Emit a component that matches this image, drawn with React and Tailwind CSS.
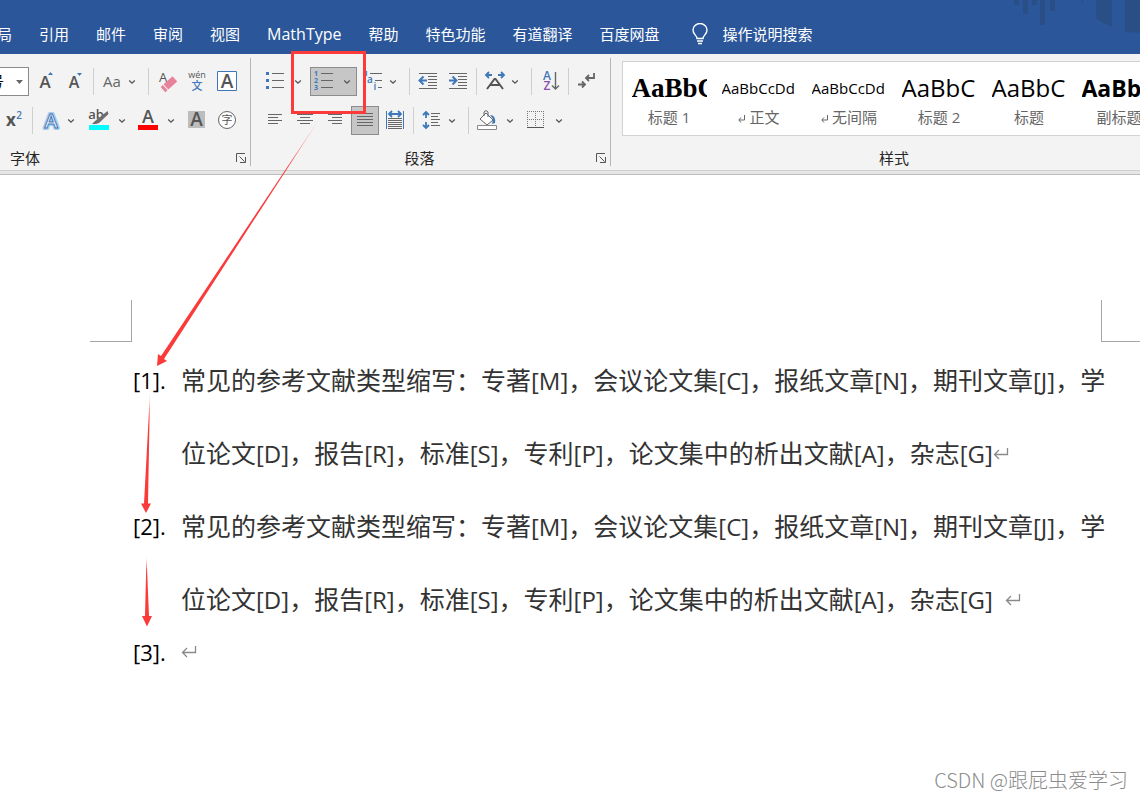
import React from "react";

const tabs = [
  { name: "布局" },
  { name: "引用" },
  { name: "邮件" },
  { name: "审阅" },
  { name: "视图" },
  { name: "MathType", latin: true },
  { name: "帮助" },
  { name: "特色功能" },
  { name: "有道翻译" },
  { name: "百度网盘" },
];

const styles = [
  {
    name: "标题 1",
    sample: "AaBbC",
    look: "font-['Liberation_Serif',serif] font-bold text-[27px]",
  },
  { name: "正文", sample: "AaBbCcDd", look: "text-[15px]", mark: true },
  { name: "无间隔", sample: "AaBbCcDd", look: "text-[15px]", mark: true },
  { name: "标题 2", sample: "AaBbC", look: "text-2xl" },
  { name: "标题", sample: "AaBbC", look: "text-2xl" },
  { name: "副标题", sample: "AaBbC", look: "font-bold text-[23px]" },
];

const firstLine =
  "常见的参考文献类型缩写：专著[M]，会议论文集[C]，报纸文章[N]，期刊文章[J]，学";
const secondLine =
  "位论文[D]，报告[R]，标准[S]，专利[P]，论文集中的析出文献[A]，杂志[G]";

const Icon = ({ children, w = 22 }) => (
  <svg
    width={w}
    height="21"
    viewBox={`0 0 ${w} 21`}
    fill="none"
    className="shrink-0 overflow-visible"
    aria-hidden="true"
  >
    {children}
  </svg>
);

const Tool = ({ label, className, children }) => (
  <button
    type="button"
    aria-label={label}
    className={`flex h-[29px] shrink-0 items-center justify-center ${className}`}
  >
    {children}
  </button>
);

const Chevron = ({ label, className = "w-2" }) => (
  <Tool label={label} className={className}>
    <svg width="8" height="6" viewBox="0 0 8 6" fill="none" aria-hidden="true">
      <path d="M1.2 1.5 4 4.2 6.8 1.5" stroke="#555" strokeWidth="1.3" />
    </svg>
  </Tool>
);

const Sep = ({ className = "" }) => (
  <span className={`h-[27px] w-px shrink-0 bg-[#cfcfcf] ${className}`} />
);

// horizontal rules given as [x1, x2, y]
const Rules = ({ rows, color = "#666" }) =>
  rows.map(([x1, x2, y]) => (
    <rect key={`${x1}-${y}`} x={x1} y={y} width={x2 - x1} height="1" fill={color} />
  ));

const Letter = ({ x, y, size, color = "#555", weight = 400, children }) => (
  <text
    x={x}
    y={y}
    fontSize={size}
    fill={color}
    fontWeight={weight}
    textAnchor="middle"
  >
    {children}
  </text>
);

const Launcher = () => (
  <button type="button" aria-label="对话框启动器" className="shrink-0">
    <svg width="10" height="10" viewBox="0 0 10 10" fill="none" aria-hidden="true">
      <path d="M.5 9V.5H9M3.5 3.5l5 5M9.5 4v5.5H4" stroke="#555" />
    </svg>
  </button>
);

const Return = ({ className = "" }) => (
  <svg
    width="16"
    height="16"
    viewBox="0 0 16 16"
    fill="none"
    className={`shrink-0 ${className}`}
    aria-hidden="true"
  >
    <path d="M14.5 2v6.500H1.500M6 4 1.500 8.500 6 13" stroke="#8a8a8a" strokeWidth="1.3" />
  </svg>
);

// bracketed codes are set a little smaller than the Chinese text
const Line = ({ text, children }) => (
  <p className="flex h-[73px] items-center">
    <span>
      {text.split(/(\[\w\])/).map((part, i) =>
        part.startsWith("[") ? (
          <span key={i} className="text-2xl">
            {part}
          </span>
        ) : (
          part
        ),
      )}
    </span>
    {children}
  </p>
);

const Header = () => (
  <header className="relative flex h-[54px] items-end overflow-hidden bg-[#2b579a] text-[15px] text-white">
    <svg
      width="130"
      height="36"
      viewBox="0 0 130 36"
      className="absolute top-0 right-0"
      fill="#2a4f87"
      aria-hidden="true"
    >
      <path d="M4 0h5v5H4zM13 0h5v14h-5zM22 0h5v5h-5zM30 0h5v25h-5zM40 0h5v11h-5z" />
      <path d="M71 0h2v4zM86 0h16v27q-9-3-16-9zM115 0h15v33l-15-1z" />
    </svg>
    <nav className="relative -ml-[18px] flex h-10 items-center gap-[27px] whitespace-nowrap">
      {tabs.map((tab) => (
        <button key={tab.name} type="button" className={tab.latin ? "text-base" : ""}>
          {tab.name}
        </button>
      ))}
      <button type="button" className="ml-1 flex items-center gap-3.5">
        <svg width="18" height="22" viewBox="0 0 18 22" fill="none" aria-hidden="true">
          <path
            d="M6 15.500c0-3-4-4-4-8.500a7 6.500 0 0 1 14 0c0 4.500-4 5.500-4 8.500zM6 18h6M7 20.500h4"
            stroke="#fff"
            strokeWidth="1.400"
          />
        </svg>
        操作说明搜索
      </button>
    </nav>
  </header>
);

const FontGroup = () => (
  <section className="flex w-[251px] shrink-0 flex-col pt-[13px]">
    <div className="flex items-center">
      <div className="relative flex h-[29px] w-[29px] shrink-0 justify-end overflow-hidden">
        <select
          aria-label="字号"
          className="w-[72px] shrink-0 appearance-none border border-[#8a8a8a] bg-white pl-4 text-[15px] text-black"
        >
          <option>四号</option>
        </select>
        <svg
          width="7"
          height="4"
          viewBox="0 0 7 4"
          className="pointer-events-none absolute top-[13px] right-1.5"
          aria-hidden="true"
        >
          <path d="M0 0h7L3.500 4z" fill="#666" />
        </svg>
      </div>
      <Tool label="增大字号" className="w-[34px]">
        <Icon>
          <Letter x={10} y={17} size={17} weight={600}>A</Letter>
          <path d="M13 4h5L15.500 1z" fill="#3f78b8" />
        </Icon>
      </Tool>
      <Tool label="减小字号" className="w-[26px]">
        <Icon>
          <Letter x={9} y={17} size={16} weight={600}>A</Letter>
          <path d="M12 2h5l-2.500 3z" fill="#3f78b8" />
        </Icon>
      </Tool>
      <Sep className="mx-1" />
      <Tool label="更改大小写" className="w-7 text-[15px] text-[#666]">Aa</Tool>
      <Chevron label="更改大小写选项" className="w-3" />
      <Sep className="ml-2.5" />
      <Tool label="清除所有格式" className="w-[38px]">
        <Icon>
          <Letter x={6} y={11} size={13}>A</Letter>
          <g transform="rotate(-42 13 13)" fill="#e8829a">
            <path d="M8 9h12v7H8z" />
            <path d="M4 9h3v7H4z" />
          </g>
        </Icon>
      </Tool>
      <Tool label="拼音指南" className="w-5">
        <Icon>
          <Letter x={11} y={7} size={9}>wén</Letter>
          <Letter x={11} y={19} size={11} color="#3f78b8" weight={500}>文</Letter>
        </Icon>
      </Tool>
      <Tool label="字符边框" className="w-10">
        <Icon>
          <path d="M1.500.500h19v19h-19z" fill="#fff" stroke="#3f78b8" />
          <Letter x={11} y={17} size={19} weight={600}>A</Letter>
        </Icon>
      </Tool>
    </div>
    <div className="mt-2.5 flex items-center">
      <Tool label="上标" className="w-7">
        <Icon>
          <Letter x={8} y={16} size={17} weight={700}>x</Letter>
          <Letter x={16} y={9} size={10} weight={600} color="#3f78b8">2</Letter>
        </Icon>
      </Tool>
      <Sep className="ml-1" />
      <Tool label="文本效果和版式" className="w-[34px]">
        <Icon>
          <text
            x="12"
            y="18"
            fontSize="20"
            fontWeight="600"
            textAnchor="middle"
            fill="#fff"
            stroke="#a9cbee"
            strokeWidth="4"
            strokeLinejoin="round"
            paintOrder="stroke"
          >
            A
          </text>
          <text
            x="12"
            y="18"
            fontSize="20"
            fontWeight="600"
            textAnchor="middle"
            fill="#fff"
            stroke="#3f78b8"
          >
            A
          </text>
        </Icon>
      </Tool>
      <Chevron label="文本效果选项" className="mr-2 w-2" />
      <Tool label="文本突出显示颜色" className="w-8">
        <Icon>
          <Letter x={8} y={9} size={13} weight={600}>ab</Letter>
          <path d="m19.500 1 1 3L11 13l-3 1H4l3-3z" fill="#6e6e6e" />
          <path d="M1 15h20v5H1z" fill="#00ffff" />
        </Icon>
      </Tool>
      <Chevron label="突出显示选项" className="w-3.5" />
      <Tool label="字体颜色" className="w-9">
        <Icon>
          <Letter x={12} y={13} size={18} weight={600}>A</Letter>
          <path d="M2 15h20v5H2z" fill="#f00" />
        </Icon>
      </Tool>
      <Chevron label="字体颜色选项" className="w-3" />
      <Tool label="字符底纹" className="w-[38px]">
        <Icon>
          <path d="M3 1h17v17H3z" fill="#bdbdbd" />
          <Letter x={11.5} y={16} size={19} weight={600}>A</Letter>
        </Icon>
      </Tool>
      <Tool label="带圈字符" className="w-6">
        <Icon>
          <circle cx="11" cy="10" r="8.500" stroke="#666" fill="#fff" />
          <Letter x={11} y={14} size={11}>字</Letter>
        </Icon>
      </Tool>
    </div>
    <div className="mt-[13px] flex h-5 items-center justify-between pr-[5px] pl-2.5 text-[15px]">
      字体
      <Launcher />
    </div>
  </section>
);

const ParagraphGroup = () => (
  <section className="flex w-[360px] shrink-0 flex-col pt-[13px]">
    <div className="flex items-center">
      <Tool label="项目符号" className="ml-1.5 w-9">
        <Icon>
          <path d="M2 1h3v3H2zM2 8h3v3H2zM2 15h3v3H2z" fill="#3f78b8" />
          <Rules rows={[[8, 20, 2], [8, 20, 9], [8, 20, 16]]} />
        </Icon>
      </Tool>
      <Chevron label="项目符号选项" className="w-2.5" />
      <div className="ml-[7px] flex h-[29px] w-[47px] shrink-0 items-center border border-[#8c8c8c] bg-[#c6c6c6]">
        <Tool label="编号" className="w-7">
          <Icon>
            <Letter x={2} y={5} size={7} weight={700} color="#3f78b8">1</Letter>
            <Letter x={2} y={12} size={7} weight={700} color="#3f78b8">2</Letter>
            <Letter x={2} y={19} size={7} weight={700} color="#3f78b8">3</Letter>
            <Rules rows={[[7, 19, 2], [7, 19, 9], [7, 19, 16]]} />
          </Icon>
        </Tool>
        <Chevron label="编号选项" className="w-4" />
      </div>
      <Tool label="多级列表" className="w-8">
        <Icon>
          <Rules rows={[[8, 20, 2], [13, 20, 9], [16, 20, 16]]} />
          <Letter x={4} y={5} size={7} weight={700} color="#3f78b8">1</Letter>
          <Letter x={8} y={12} size={10} weight={600} color="#3f78b8">a</Letter>
          <Letter x={13} y={19} size={10} weight={600} color="#3f78b8">i</Letter>
        </Icon>
      </Tool>
      <Chevron label="多级列表选项" />
      <Sep className="ml-3" />
      <Tool label="减少缩进量" className="w-9">
        <Icon>
          <Rules rows={[[2, 20, 2], [11, 20, 5], [11, 20, 8], [11, 20, 11], [11, 20, 14], [2, 20, 17]]} />
          <path d="M10 9.500H3M6.500 5.500l-4 4 4 4" stroke="#3f78b8" strokeWidth="2" />
        </Icon>
      </Tool>
      <Tool label="增加缩进量" className="w-6">
        <Icon>
          <Rules rows={[[2, 20, 2], [11, 20, 5], [11, 20, 8], [11, 20, 11], [11, 20, 14], [2, 20, 17]]} />
          <path d="M2 9.500h7M5.500 5.500l4 4-4 4" stroke="#3f78b8" strokeWidth="2" />
        </Icon>
      </Tool>
      <Sep className="ml-1.5" />
      <Tool label="中文版式" className="w-[34px]">
        <Icon>
          <path
            d="M9 4H3M6 1 3 4l3 3M15 4h6M18 1l3 3-3 3"
            stroke="#3f78b8"
            strokeWidth="1.800"
          />
          <path d="m4 18 7.500-10h1l7.500 10M7 14h10" stroke="#555" strokeWidth="2" />
        </Icon>
      </Tool>
      <Chevron label="中文版式选项" />
      <Sep className="ml-3" />
      <Tool label="排序" className="w-9">
        <Icon>
          <Letter x={8} y={9} size={12} weight={600} color="#3f78b8">A</Letter>
          <Letter x={8} y={19} size={12} weight={600} color="#8a4fb0">Z</Letter>
          <path d="M16.500 1v17M13 14.500l3.500 3.500 3.500-3.500" stroke="#666" strokeWidth="1.400" />
        </Icon>
      </Tool>
      <Sep />
      <Tool label="显示/隐藏编辑标记" className="w-9">
        <Icon>
          <path
            d="M18 2v5h-8M13 4l-3 3 3 3M2 13.500h7M6 10.500l3 3-3 3"
            stroke="#666"
            strokeWidth="1.800"
          />
        </Icon>
      </Tool>
    </div>
    <div className="mt-2.5 flex items-center">
      <Tool label="左对齐" className="ml-[9px] w-[30px]">
        <Icon>
          <Rules rows={[[4, 18, 4], [4, 14, 7], [4, 18, 10], [4, 14, 13]]} />
        </Icon>
      </Tool>
      <Tool label="居中" className="w-[30px]">
        <Icon>
          <Rules rows={[[3, 19, 4], [6, 16, 7], [3, 19, 10], [6, 16, 13]]} />
        </Icon>
      </Tool>
      <Tool label="右对齐" className="w-[30px]">
        <Icon>
          <Rules rows={[[4, 18, 4], [8, 18, 7], [4, 18, 10], [8, 18, 13]]} />
        </Icon>
      </Tool>
      <Tool label="两端对齐" className="ml-px w-7 border border-[#8c8c8c] bg-[#c6c6c6]">
        <Icon>
          <Rules rows={[[3, 19, 3], [3, 19, 6], [3, 19, 9], [3, 19, 12], [3, 19, 15]]} />
        </Icon>
      </Tool>
      <Tool label="分散对齐" className="w-8">
        <Icon>
          <path d="M2.500 1v18M19.500 1v18" stroke="#3f78b8" />
          <path d="M5 4h12M8 1 5 4l3 3M14 1l3 3-3 3" stroke="#3f78b8" strokeWidth="1.800" />
          <Rules rows={[[4, 18, 8], [4, 18, 10], [4, 18, 12], [4, 18, 14], [4, 18, 16], [4, 18, 18]]} />
        </Icon>
      </Tool>
      <Sep className="ml-0.5" />
      <Tool label="行和段落间距" className="w-[34px]">
        <Icon>
          <path
            d="M6 2v6M3 5l3-3 3 3M6 18v-6M3 15l3 3 3-3"
            stroke="#3f78b8"
            strokeWidth="1.800"
          />
          <Rules rows={[[11, 20, 3], [11, 18, 6], [11, 20, 9], [11, 18, 12], [11, 20, 15]]} />
        </Icon>
      </Tool>
      <Chevron label="行距选项" />
      <Sep className="ml-3" />
      <Tool label="底纹" className="w-9">
        <Icon>
          <path d="m4 9 6-6 7 7-6 5z" fill="#fff" stroke="#666" />
          <path d="M8 6V2q2-3 4 0v5" stroke="#666" />
          <path d="M14 5q6 0 5 8l-3 1 1-5z" fill="#3f78b8" />
          <path d="M1.500 15.500h19v4h-19z" fill="#fff" stroke="#888" />
        </Icon>
      </Tool>
      <Chevron label="底纹选项" className="w-2.5" />
      <Tool label="边框" className="w-10">
        <Icon>
          <path
            d="M3.500 1v17M11.500 1v17M19.500 1v17M3 1.500h17M3 9.500h17"
            stroke="#777"
            strokeDasharray="1 1"
          />
          <path d="M3 17.500h17" stroke="#555" />
        </Icon>
      </Tool>
      <Chevron label="边框选项" />
    </div>
    <div className="mt-[13px] flex h-5 items-center pr-[5px] text-[15px]">
      <span className="flex-1 pr-2 text-center">段落</span>
      <Launcher />
    </div>
  </section>
);

const StylesGroup = () => (
  <section className="min-w-0 flex-1 overflow-hidden pt-[7px] pl-[11px]">
    <div className="flex h-[75px] w-max border border-[#d2d2d2] bg-white pl-px">
      {styles.map((s) => (
        <button
          key={s.name}
          type="button"
          className="flex w-[90px] shrink-0 flex-col items-center"
        >
          <span
            className={`mt-2 flex h-9 w-[75px] items-center overflow-hidden text-black ${s.look}`}
          >
            {s.sample}
          </span>
          <span className="flex h-[22px] items-center gap-1 text-[15px] whitespace-nowrap text-[#666]">
            {s.mark && (
              <svg
                width="7"
                height="8"
                viewBox="0 0 7 8"
                fill="none"
                className="mt-1"
                aria-hidden="true"
              >
                <path d="M6.500 0v5H1M3 2.500.800 5 3 7.500" stroke="#666" />
              </svg>
            )}
            {s.name}
          </span>
        </button>
      ))}
    </div>
    <div className="mt-3 flex h-5 items-center pl-[257px] text-[15px]">样式</div>
  </section>
);

const Ribbon = () => (
  <div className="flex h-[121px] overflow-hidden border-b border-[#bdbdbd] bg-[#e6e6e6] pb-[3px] text-[#262626]">
    <div className="flex min-w-0 flex-1 border-b border-[#cfcfcf] bg-[#f3f3f3]">
      <FontGroup />
      <span className="my-1 -ml-px w-px shrink-0 bg-[#b5b5b5]" />
      <ParagraphGroup />
      <span className="my-1 -ml-px w-px shrink-0 bg-[#b5b5b5]" />
      <StylesGroup />
    </div>
  </div>
);

const Entry = ({ number, children }) => (
  <li className="flex">
    <span className="w-12 shrink-0 text-[22px] text-black">[{number}].</span>
    <div className="flex-1">{children}</div>
  </li>
);

const Document = () => (
  <main className="flex flex-1 flex-col overflow-hidden bg-white pt-[125px]">
    <div className="flex justify-between pl-[90px]">
      <span className="h-[42px] w-[42px] border-r border-b border-[#a6a6a6]" />
      <span className="h-[42px] w-[39px] border-b border-l border-[#a6a6a6]" />
    </div>
    <ol className="mt-0.5 pl-[133px] text-[25px] leading-[73px] whitespace-nowrap text-[#333]">
      <Entry number={1}>
        <Line text={firstLine} />
        <Line text={secondLine}>
          <Return />
        </Line>
      </Entry>
      <Entry number={2}>
        <Line text={firstLine} />
        <Line text={secondLine}>
          <Return className="ml-3" />
        </Line>
      </Entry>
    </ol>
    <ol start="3" className="pl-[133px] leading-8">
      <Entry number={3}>
        <p className="flex h-8 items-center">
          <Return />
        </p>
      </Entry>
    </ol>
    <p className="mt-auto self-end pr-3 pb-[5px] font-['Noto_Sans_CJK_SC',sans-serif] text-xl font-light text-[#8c8c8c]">
      CSDN @跟屁虫爱学习
    </p>
  </main>
);

// red box and arrows drawn on top of the window
const Annotations = () => (
  <svg
    width="400"
    height="640"
    viewBox="0 0 400 640"
    className="pointer-events-none absolute top-0 left-0"
    fill="none"
    aria-hidden="true"
  >
    <defs>
      <linearGradient id="fade" x1="0" y1="0" x2="0" y2="1">
        <stop offset="0" stopColor="#fb3a3a" stopOpacity="0.2" />
        <stop offset="0.2" stopColor="#fb3a3a" />
      </linearGradient>
    </defs>
    <path d="M292.500 52.500h72v60h-72z" stroke="#fb3a3a" strokeWidth="3" />
    <path
      d="M320 118 161 356 158 354l-1 12 10-5-3-2z"
      fill="url(#fade)"
    />
    <path d="M150 392 144 503.500h-3l5 9.500 5-9.500h-3z" fill="url(#fade)" />
    <path d="M146.500 556 145 616h-3l5 10.500 5-10.500h-3z" fill="url(#fade)" />
  </svg>
);

export default function App() {
  return (
    <div className="relative flex min-h-screen flex-col overflow-hidden font-['Open_Sans','Noto_Sans_CJK_SC',sans-serif]">
      <Header />
      <Ribbon />
      <Document />
      <Annotations />
    </div>
  );
}
